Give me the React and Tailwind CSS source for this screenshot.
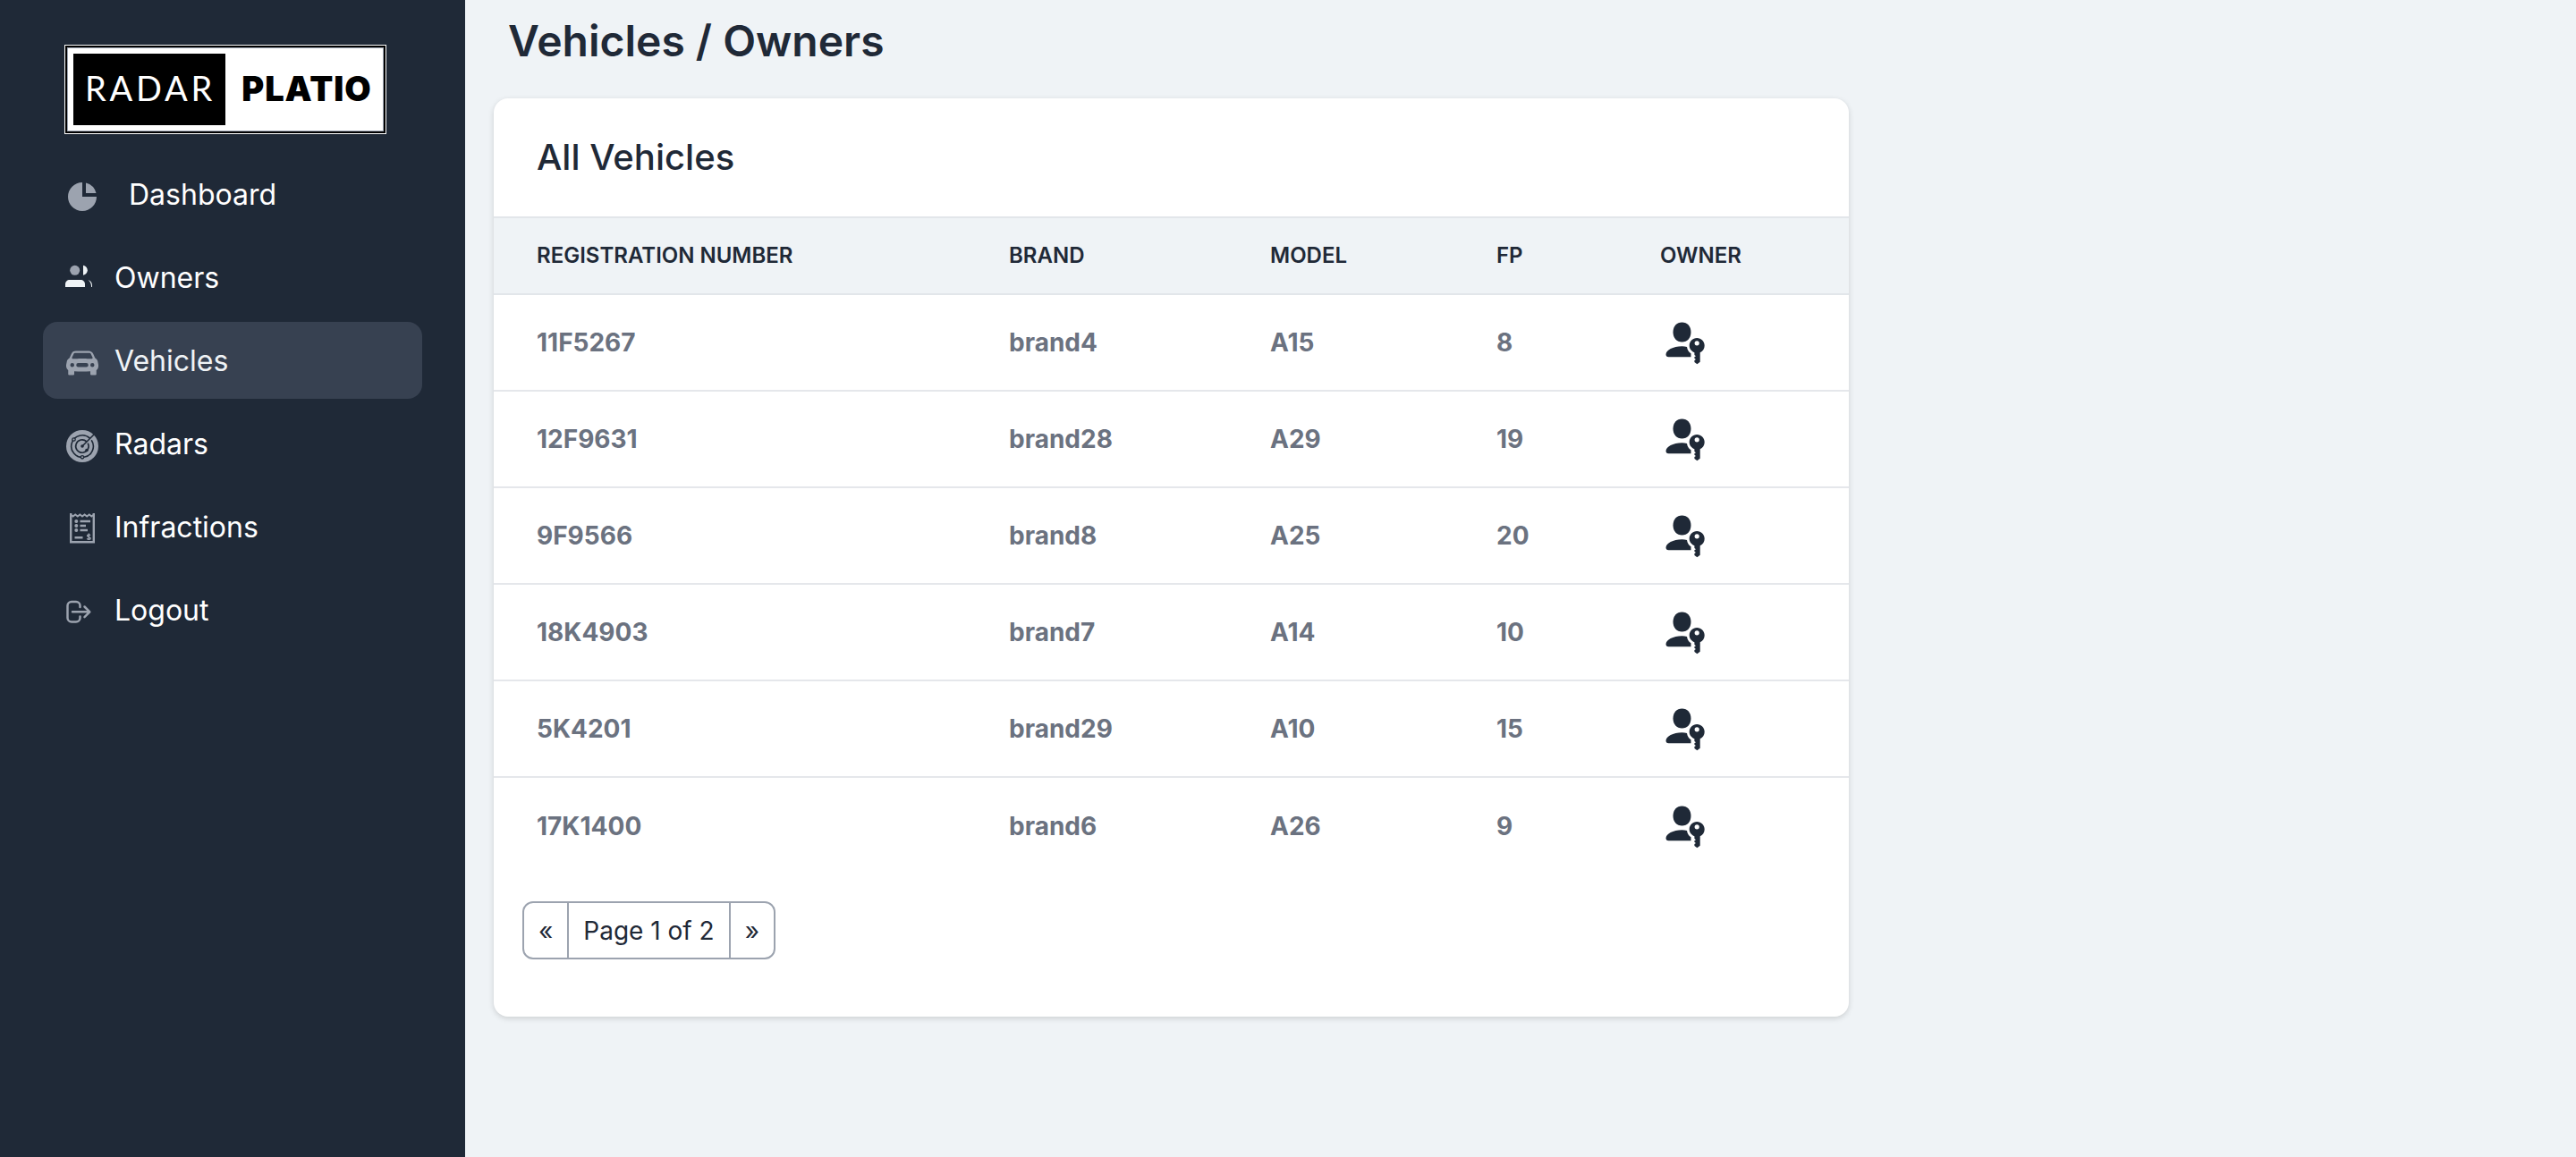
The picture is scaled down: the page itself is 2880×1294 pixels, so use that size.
import { BsCarFrontFill } from "react-icons/bs";

const navItems = [
  { label: "Dashboard", icon: PieIcon, wide: true },
  { label: "Owners", icon: PeopleIcon },
  { label: "Vehicles", icon: CarIcon, active: true },
  { label: "Radars", icon: RadarIcon },
  { label: "Infractions", icon: ReceiptIcon },
  { label: "Logout", icon: LogoutIcon },
];

const vehicles = [
  ["11F5267", "brand4", "A15", "8"],
  ["12F9631", "brand28", "A29", "19"],
  ["9F9566", "brand8", "A25", "20"],
  ["18K4903", "brand7", "A14", "10"],
  ["5K4201", "brand29", "A10", "15"],
  ["17K1400", "brand6", "A26", "9"],
];

function PieIcon() {
  return (
    <svg viewBox="0 0 20 20" className="size-10" fill="currentColor" aria-hidden="true">
      <path d="M2 10a8 8 0 018-8v8h8a8 8 0 11-16 0z" />
      <path d="M12 2.252A8.014 8.014 0 0117.748 8H12V2.252z" />
    </svg>
  );
}

function PeopleIcon() {
  return (
    <svg viewBox="0 0 40 40" className="size-10" aria-hidden="true">
      <circle cx="11.7" cy="9.3" r="5.5" fill="currentColor" />
      <g fill="#eff3f6">
        <path d="M1 28v-3c0-3 2-5 5-5h12c3 0 5 2 5 5v3z" />
        <path d="M21 3.800c3 .6 4.800 2.900 4.800 5.500s-1.800 4.900-4.800 5.500z" />
        <path d="M26.600 20c2.800.800 4.400 3.200 4.400 6v2h-.9c0-3.300-1-6-3.500-8z" />
      </g>
    </svg>
  );
}

function CarIcon() {
  return <BsCarFrontFill className="mx-0.5 size-9" aria-hidden="true" />;
}

function RadarIcon() {
  return (
    <svg viewBox="0 0 36 36" className="mx-0.5 size-9" aria-hidden="true">
      <circle cx="18" cy="18" r="18" fill="currentColor" />
      <g fill="none" stroke="#1f2937" strokeWidth="1.6">
        <path d="M26.500 9.200A12.300 12.300 0 1 0 28.200 11.200" />
        <path d="M22.800 12.800A7.200 7.200 0 1 0 24.200 14.600" />
        <path d="M18 18 31.500 4.500" />
      </g>
      <circle cx="18" cy="18" r="1.800" fill="#1f2937" />
      <circle cx="23" cy="22.500" r="1.800" fill="#1f2937" />
      <circle cx="8.500" cy="10.500" r="1.700" fill="currentColor" stroke="#1f2937" strokeWidth="1.300" />
      <circle cx="18" cy="30.300" r="1.700" fill="currentColor" stroke="#1f2937" strokeWidth="1.300" />
    </svg>
  );
}

function ReceiptIcon() {
  return (
    <svg viewBox="0 0 36 36" className="mx-0.5 size-9" aria-hidden="true">
      <g fill="none" stroke="currentColor" strokeWidth="2.400">
        <path d="M5.200 0v32.300h25.600V0" />
        <path d="M5 1.500l2.600 2 2.600-2 2.600 2 2.600-2L18 3.500l2.600-2 2.600 2 2.600-2 2.600 2L31 1.500" strokeWidth="2" />
        <path d="M15.500 9h11.500M15.500 14h6.500M15.500 19h8.500M9.500 27.300h9" />
        <path strokeWidth="1.300" d="M27 24.800c-1-1.500-3.500-1-3.500.5s3.800 1 3.800 2.800-3.300 1.700-4 .2M25.300 22.500v7.500" />
      </g>
      <g fill="currentColor">
        <circle cx="11.300" cy="9" r="2" />
        <circle cx="11.300" cy="14" r="2" />
        <circle cx="11.300" cy="19" r="2" />
      </g>
    </svg>
  );
}

function LogoutIcon() {
  return (
    <svg viewBox="0 0 40 40" className="size-10" fill="none" stroke="currentColor" strokeWidth="2.500" strokeLinecap="round" strokeLinejoin="round" aria-hidden="true">
      <path d="M17.500 14v-1.500a4.500 4.500 0 0 0-4.500-4.500H8a4.500 4.500 0 0 0-4.500 4.500v13.500a4.500 4.500 0 0 0 4.500 4.500h5a4.500 4.500 0 0 0 4.500-4.500v-1.500" />
      <path d="M9 19.300h19M22.500 13.500l5.800 5.800-5.800 5.800" />
    </svg>
  );
}

function OwnerKeyIcon() {
  return (
    <svg viewBox="0 0 44 48" className="h-12 w-11" fill="#1f2937" aria-hidden="true">
      <path d="M18.500 0.500c6 0 10 4.500 10 11s-4 11-10 11-10-4.500-10-11 4-11 10-11z" />
      <path d="M18.500 27.300c2 0 3.800.2 5.500.6.400 3.200 2 5.700 4.500 7.300v4H3.500c-2 0-3-1.200-3-2.800 0-4.500 8-9.100 18-9.100z" />
      <path fillRule="evenodd" d="M35.200 18c4.700 0 8.500 3.800 8.500 8.500 0 3.500-2 6.300-5 7.700v10.500l-3.300 2.600-3-2.300v-2l1.600-1-1.600-1.300v-1.500l1.600-1-1.600-1.300v-2.700c-3.300-1.300-5.700-4.200-5.700-7.700 0-4.700 3.800-8.500 8.500-8.500zm0 3.200a2.600 2.600 0 1 0 0 5.200 2.600 2.600 0 0 0 0-5.200z" />
    </svg>
  );
}

function Logo() {
  return (
    <a href="#" className="mx-6 flex h-[100px] w-[360px] border border-white bg-black p-0.5">
      <span className="flex flex-1 items-stretch border border-gray-400 bg-white p-1.5">
        <span className="flex w-[170px] items-center justify-center bg-black pb-1 pl-0.5 font-[Lato] text-[38px] tracking-widest text-white">
          RADAR
        </span>
        <span className="flex flex-1 items-center justify-center pb-0.5 pl-3 text-[38px] font-black tracking-wide text-black">PLATIO</span>
      </span>
    </a>
  );
}

function Sidebar() {
  return (
    <aside className="w-[520px] shrink-0 bg-[#1f2937] px-12 pt-[50px]">
      <Logo />
      <nav className="mt-6">
        <ul className="flex flex-col gap-[7px]">
          {navItems.map(({ label, icon: Icon, active, wide }) => (
            <li key={label}>
              <a
                href="#"
                className={`flex h-[86px] items-center rounded-2xl px-6 pt-0.5 text-[32px] ${active ? "bg-[#374151] text-[#eff3f6]" : "text-white"}`}
              >
                <span className="pt-1 text-[#9ca3af]">
                  <Icon />
                </span>
                <span className={wide ? "ml-8" : "ml-4"}>{label}</span>
              </a>
            </li>
          ))}
        </ul>
      </nav>
    </aside>
  );
}

export default function App() {
  return (
    <div className="flex min-h-screen bg-[#eff3f6] font-[Inter,sans-serif] text-[#1f2937]">
      <Sidebar />
      <main className="flex-1 px-8">
        <h1 className="px-4 pt-3 text-5xl/[68px] font-semibold">Vehicles / Owners</h1>
        <section className="mt-[30px] w-[1515px] max-w-full overflow-hidden rounded-2xl bg-white pb-16 shadow-[0_2px_6px_rgba(0,0,0,0.15)]">
          <h2 className="px-12 py-9 text-[40px]/[60px] font-medium">All Vehicles</h2>
          <table className="w-full table-fixed border-collapse text-left">
            <colgroup>
              <col className="w-[528px]" />
              <col className="w-[292px]" />
              <col className="w-[253px]" />
              <col className="w-[183px]" />
              <col />
            </colgroup>
            <thead className="bg-[#eff3f6] text-2xl uppercase">
              <tr className="h-[86px] border-y-2 border-[#e2e6ea]">
                <th className="pl-12 font-semibold">Registration number</th>
                <th className="pl-12 font-semibold">Brand</th>
                <th className="pl-12 font-semibold">Model</th>
                <th className="pl-12 font-semibold">FP</th>
                <th className="pl-12 font-semibold">Owner</th>
              </tr>
            </thead>
            <tbody className="text-[28px] font-bold text-[#6b7280]">
              {vehicles.map((row) => (
                <tr key={row[0]} className="h-[108px] border-b-2 border-[#e5e7eb] last:border-b-0">
                  {row.map((cell) => (
                    <td key={cell} className="pl-12">{cell}</td>
                  ))}
                  <td className="pt-0.5 pl-[54px]">
                    <button type="button" aria-label="Show owner" className="block">
                      <OwnerKeyIcon />
                    </button>
                  </td>
                </tr>
              ))}
            </tbody>
          </table>
          <div className="mt-[31px] ml-8 inline-flex h-[65px] divide-x-2 divide-[#9ca3af] rounded-xl border-2 border-[#9ca3af] text-[28px]">
            <button type="button" aria-label="Previous page" className="px-4">«</button>
            <span className="flex items-center px-4">Page 1 of 2</span>
            <button type="button" aria-label="Next page" className="px-4">»</button>
          </div>
        </section>
      </main>
    </div>
  );
}
